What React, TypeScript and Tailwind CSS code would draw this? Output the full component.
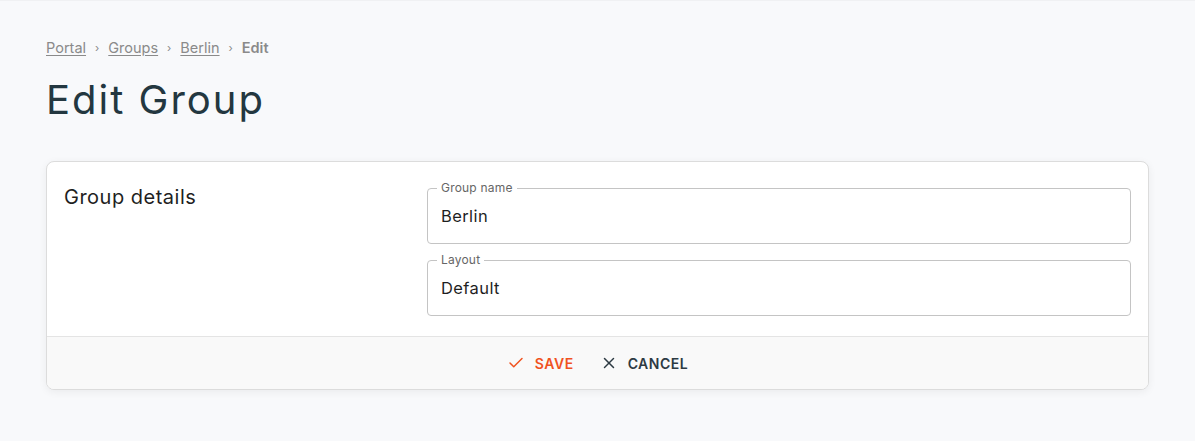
import { Check, X } from "lucide-react";

type FieldProps = {
  label: string;
  value: string;
};

const Field = ({ label, value }: FieldProps) => {
  return (
    <fieldset className="border border-[#c4c4c4] rounded-[4px] h-[63px] px-[13px] m-0 min-w-0">
      <legend className="px-[4px] -ml-[4px] text-[12px] leading-[14px] text-[#666] tracking-[0.2px]">
        {label}
      </legend>
      <div className="text-[16.5px] leading-[20px] text-[#1f1f1f] mt-[11px] tracking-[0.4px]">
        {value}
      </div>
    </fieldset>
  );
};

export default function App() {
  return (
    <div
      className="min-h-[441px] bg-[#f8f9fb] border-t border-[#f0f1f3] px-[46px] pt-[38px]"
      style={{ fontFamily: "Inter, 'Noto Sans', sans-serif" }}
    >
      <nav className="flex items-center gap-[9px] text-[14.5px] leading-[18px] text-[#8a8a8a]">
        <a className="underline underline-offset-2">Portal</a>
        <span className="text-[11px]">›</span>
        <a className="underline underline-offset-2">Groups</a>
        <span className="text-[11px]">›</span>
        <a className="underline underline-offset-2">Berlin</a>
        <span className="text-[11px]">›</span>
        <span className="font-semibold">Edit</span>
      </nav>
      <h1 className="mt-[20px] text-[40px] leading-[46px] text-[#233740] tracking-[2px]">
        Edit Group
      </h1>
      <div className="mt-[38px] w-[1103px] bg-white border border-[#dcdcdc] rounded-[8px] shadow-[0_2px_8px_rgba(0,0,0,0.06)] overflow-hidden">
        <div className="flex pl-[17px] pr-[17px] pt-[19px] pb-[20px]">
          <div className="w-[363px] text-[20px] leading-[28px] text-[#1f1f1f] pt-[2px] tracking-[0.5px]">
            Group details
          </div>
          <div className="flex-1 flex flex-col gap-[9px]">
            <Field label="Group name" value="Berlin" />
            <Field label="Layout" value="Default" />
          </div>
        </div>
        <div className="h-[53px] bg-[#f9f9f9] border-t border-[#e4e4e4] flex items-center justify-center gap-[26px] text-[14px] font-semibold tracking-[0.5px]">
          <button className="flex items-center gap-[10px] text-[#f0521f]">
            <Check size={18} strokeWidth={2} />
            SAVE
          </button>
          <button className="flex items-center gap-[10px] text-[#2d3a43]">
            <X size={18} strokeWidth={2} />
            CANCEL
          </button>
        </div>
      </div>
    </div>
  );
}
